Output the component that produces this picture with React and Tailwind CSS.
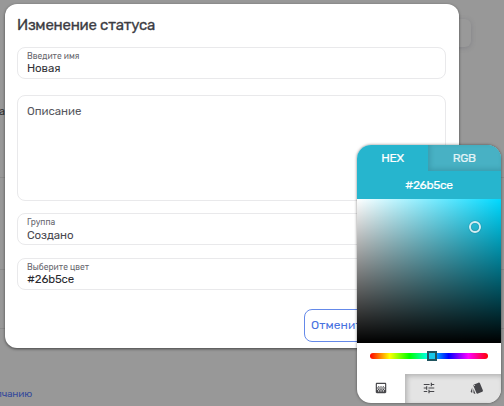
import { MdGradient, MdTune, MdStyle } from 'react-icons/md';

function Field({ label, value, className, labelClass, valueClass }) {
  return (
    <div className={`w-[429px] shrink-0 rounded-lg border border-[#e9e9eb] pl-[9px] ${className}`}>
      <div className={`h-[10px] whitespace-nowrap text-[8.5px] leading-[10px] text-[#66666d] ${labelClass}`}>
        <span>{label}</span>
      </div>
      <div className={`whitespace-nowrap text-[11.5px] leading-[14px] ${valueClass}`}>
        <span>{value}</span>
      </div>
    </div>
  );
}

function Backdrop() {
  return (
    <div className="flex h-full flex-col">
      <div className="flex h-[105px] justify-end pr-[33px] pt-[19px]">
        <div className="h-7 w-24 rounded-md bg-[#999] shadow-[0_1px_5px_rgba(70,70,90,0.25)]" />
      </div>
      <div className="h-[73px] border-b border-[#8b8b8b] text-[11px] leading-[14px] text-[#333]">
        <span className="-ml-px">а</span>
      </div>
      <div className="h-[92px] border-b border-[#8b8b8b]" />
      <div className="h-[59px] border-b border-[#8b8b8b]" />
      <div className="mt-[58px] whitespace-nowrap text-[10px] leading-[14px] text-[#354a9b]">
        <span className="-ml-[4px] tracking-[-0.15px]">лчанию</span>
      </div>
    </div>
  );
}

function Dialog() {
  return (
    <div className="absolute left-[4.5px] top-[4px] flex h-[344px] w-[454px] flex-col rounded-xl bg-white pl-[12.5px] shadow-[0_1px_3px_rgba(0,0,0,0.55)]">
      <h1 className="mt-[11px] h-[21px] shrink-0 text-[15px] leading-[21px] text-[#3c3c43] [-webkit-text-stroke:0.3px_#3c3c43]">
        <span className="tracking-[-0.22px]">Изменение статуса</span>
      </h1>
      <Field label="Введите имя" value="Новая" className="mt-[11px] h-[32px] pt-[3px]" labelClass="tracking-[0.02px]" valueClass="tracking-[-0.1px] text-[#333338]" />
      <div className="mt-[16px] h-[106px] w-[429px] shrink-0 rounded-lg border border-[#e9e9eb] pl-[9px] pt-[8px] text-[11.5px] leading-[14px] text-[#57575e]">
        <span className="tracking-[-0.05px]">Описание</span>
      </div>
      <Field label="Группа" value="Создано" className="mt-[12px] h-[32px] pt-[3px]" labelClass="tracking-[0.02px]" valueClass="pt-px tracking-[-0.08px] text-[#48484f]" />
      <Field label="Выберите цвет" value="#26b5ce" className="mt-[13px] h-[32px] pt-[3px]" labelClass="tracking-[0.02px]" valueClass="tracking-[-0.15px] text-[#29292e]" />
      <div className="ml-[287px] mt-[19px] flex h-[33px] w-[90px] shrink-0 items-center rounded-lg border border-[#6489e9] pb-[2px] pl-[6px] text-[12px] text-[#4872df]">
        <span className="tracking-[0.1px]">Отменить</span>
      </div>
    </div>
  );
}

function ColorPicker() {
  return (
    <div className="absolute left-[357px] top-[145px] flex h-[258px] w-[143.5px] flex-col overflow-hidden rounded-[14px] bg-white shadow-[0_0_3px_rgba(0,0,0,0.5)]">
      <div className="h-[54px] shrink-0 bg-[#26b5ce] text-white">
        <div className="flex h-[26px] text-center text-[12px] leading-[26px] tracking-[-0.3px] [-webkit-text-stroke:0.2px_currentColor]">
          <div className="w-[71px]">HEX</div>
          <div className="flex-1 bg-[#48b1c4] text-[#e3f4f7] shadow-[inset_2px_-2px_5px_rgba(0,70,85,0.2)]">RGB</div>
        </div>
        <div className="text-center text-[12px] leading-[28px] tracking-[-0.4px] [-webkit-text-stroke:0.2px_currentColor]">#26b5ce</div>
      </div>
      <div className="relative h-[144px] shrink-0 bg-[#00d9ff]">
        <div className="h-full bg-[linear-gradient(to_right,#fff,rgba(255,255,255,0))]">
          <div className="h-full bg-[linear-gradient(to_top,#000,rgba(0,0,0,0))]" />
        </div>
        <div className="absolute left-[112px] top-[22px] size-[12px] rounded-full border-2 border-[#d4edf2] shadow-[0_0_1px_0_rgba(0,60,75,0.9),inset_0_0_1px_rgba(0,60,75,0.9)]" />
      </div>
      <div className="flex h-[31px] shrink-0 items-start px-[12.5px] pt-[10px]">
        <div className="relative h-[6px] w-full rounded-full bg-[linear-gradient(to_right,#f00,#ff0,#0f0,#0ff,#00f,#f0f,#f00)]">
          <div className="absolute left-[57px] top-[-2px] h-[10px] w-[10px] border-2 border-[#20545f] bg-[#18c7e8]" />
        </div>
      </div>
      <div className="flex flex-1 text-[14px] text-[#47474b]">
        <div className="flex w-[48px] items-center justify-center pb-px"><MdGradient /></div>
        <div className="flex flex-1 bg-[#e4e4e4] pb-px shadow-[inset_2px_2px_5px_rgba(0,0,0,0.22)]">
          <div className="flex flex-1 items-center justify-center"><MdTune /></div>
          <div className="flex flex-1 items-center justify-center"><MdStyle /></div>
        </div>
      </div>
    </div>
  );
}

export default function App() {
  return (
    <main className="relative h-[406px] w-[504px] overflow-hidden bg-[#989898] font-['Rubik','Roboto',sans-serif]">
      <Backdrop />
      <Dialog />
      <ColorPicker />
    </main>
  );
}
